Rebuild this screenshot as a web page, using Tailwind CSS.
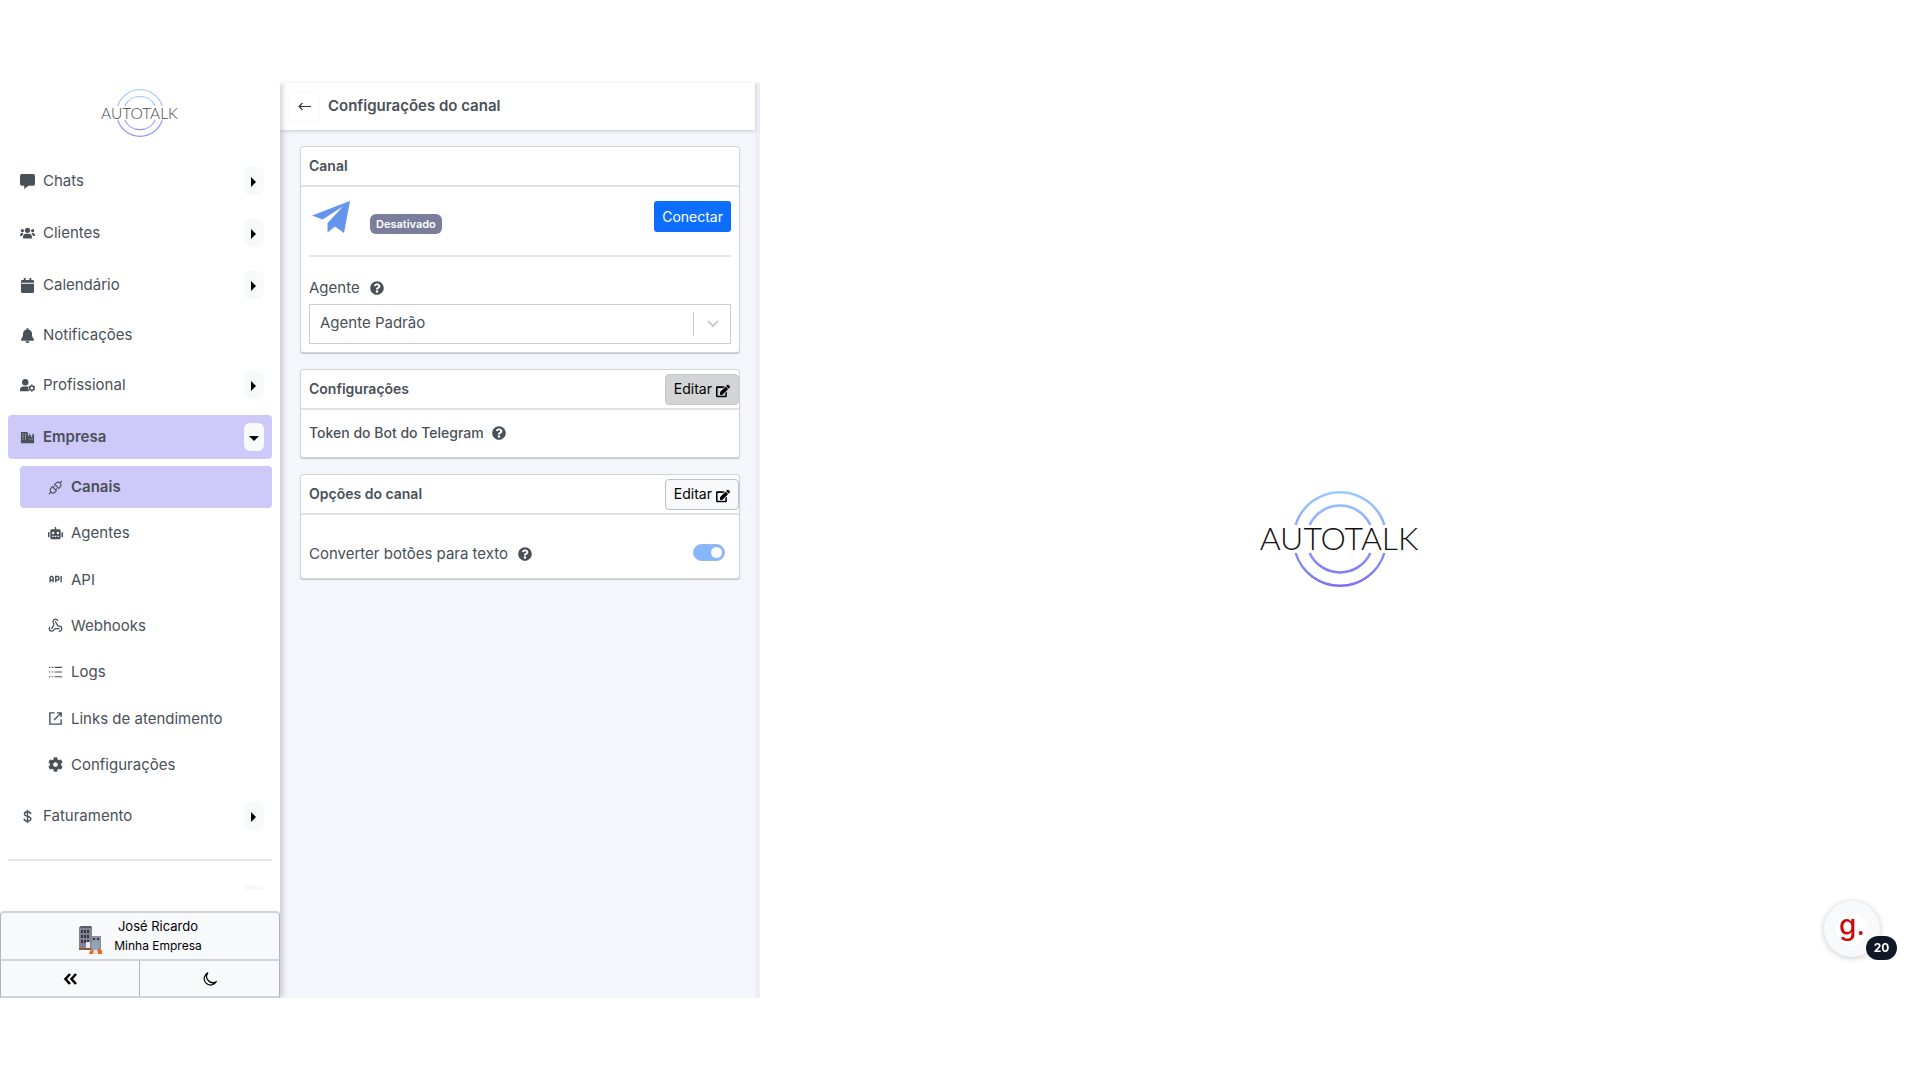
<!DOCTYPE html>
<html lang="pt-BR">
<head>
  <meta charset="utf-8">
  <title>Configurações do canal - Autotalk</title>
  <meta name="viewport" content="width=device-width, initial-scale=1.0" />
  <script src="https://cdn.jsdelivr.net/npm/@tailwindcss/browser@4"></script>
</head>
<body class="bg-white font-['Inter','Liberation_Sans',sans-serif] text-[15px] leading-6 text-[#495057]">

<!-- Símbolos reutilizados -->
<svg class="absolute size-0" aria-hidden="true">
  <defs>
    <linearGradient id="grad" gradientUnits="userSpaceOnUse" x1="0" y1="0" x2="0" y2="96">
      <stop offset="0" stop-color="#9accff" />
      <stop offset="1" stop-color="#7a70f5" />
    </linearGradient>
  </defs>
  <symbol id="help" viewBox="0 0 512 512">
    <path fill="currentColor" d="M504 256c0 137-111 248-248 248S8 393 8 256 119 8 256 8s248 111 248 248zM262.700 90c-54.500 0-89.300 23-116.500 63.800-3.500 5.300-2.400 12.400 2.700 16.300l34.700 26.300c5.200 3.900 12.600 3 16.700-2.100 17.900-22.700 30.100-35.800 57.300-35.800 20.400 0 45.700 13.100 45.700 33 0 15-12.400 22.700-32.500 34C247.100 238.500 216 255 216 296v4c0 6.600 5.400 12 12 12h56c6.600 0 12-5.400 12-12v-1.300c0-28.800 84.200-30 84.200-107.900C380.200 132.200 319.300 90 262.700 90zM256 338c-25.400 0-46 20.600-46 46s20.600 46 46 46 46-20.600 46-46-20.600-46-46-46z" />
  </symbol>
  <symbol id="edit" viewBox="0 0 576 512">
    <path fill="currentColor" d="M402.600 83.200l90.200 90.200c3.800 3.800 3.800 10 0 13.800L274.400 405.600l-92.800 10.300c-12.400 1.400-22.900-9.100-21.500-21.500l10.300-92.800L388.800 83.200c3.800-3.800 10-3.800 13.800 0zm162-22.900l-48.800-48.800c-15.200-15.200-39.900-15.200-55.200 0l-35.400 35.400c-3.800 3.800-3.800 10 0 13.800l90.200 90.200c3.800 3.800 10 3.800 13.800 0l35.400-35.400c15.200-15.300 15.200-40 0-55.200zM384 346.200V448H64V128h229.800c3.200 0 6.200-1.300 8.500-3.500l40-40c7.600-7.600 2.200-20.500-8.500-20.500H48C21.500 64 0 85.500 0 112v352c0 26.500 21.500 48 48 48h352c26.500 0 48-21.500 48-48V306.200c0-10.700-12.900-16-20.500-8.500l-40 40c-2.200 2.300-3.500 5.300-3.500 8.500z" />
  </symbol>
  <symbol id="rings" viewBox="0 0 160 96">
    <g fill="none" stroke="url(#grad)" stroke-width="2.500">
      <path d="M35.600 34A46.500 46.500 0 0 1 124.400 34M35.600 62A46.500 46.500 0 0 0 124.400 62" />
      <path d="M49.600 34A33.500 33.500 0 0 1 110.400 34M49.600 62A33.500 33.500 0 0 0 110.400 62" />
    </g>
  </symbol>
</svg>

<div class="flex min-h-screen flex-col pt-[83px] pb-[82px]">
  <div class="flex flex-1">

    <!-- Menu lateral -->
    <aside class="relative z-10 flex w-[280px] shrink-0 flex-col bg-white shadow-[2px_0_6px_rgba(60,70,100,0.28)] [clip-path:inset(0_-10px_0_0)]">
      <div class="flex justify-center pt-1.5">
        <svg class="h-12 w-20 opacity-80" viewBox="0 0 160 96" role="img" aria-label="Autotalk">
          <use href="#rings" width="160" height="96" />
          <text x="79" y="59" text-anchor="middle" fill="#111" font-family="Lato" font-weight="300" font-size="31">AUTOTALK</text>
        </svg>
      </div>

      <nav class="mt-[22px] flex flex-col gap-2 px-2">
        <div class="flex h-11 items-center justify-between pr-2 pl-3">
          <a href="#" class="flex items-center gap-2">
            <svg class="size-[15px]" viewBox="0 0 16 16" fill="currentColor"><path d="M2 0a2 2 0 0 0-2 2v8.500a2 2 0 0 0 2 2h2.500V16L9 12.500h5a2 2 0 0 0 2-2V2a2 2 0 0 0-2-2z" /></svg>
            Chats
          </a>
          <button aria-label="Abrir Chats" class="flex h-7 w-5 items-center justify-center rounded-md bg-[#f8f9fa]"><svg class="mt-0.5 mr-px h-2.5 w-[5px]" viewBox="0 0 5 10"><path d="M0 0l5 5-5 5z" /></svg></button>
        </div>
        <div class="flex h-11 items-center justify-between pr-2 pl-3">
          <a href="#" class="flex items-center gap-2">
            <svg class="size-[15px]" viewBox="0 0 16 16" fill="currentColor"><circle cx="8" cy="4.600" r="2.800" /><circle cx="2.500" cy="5" r="1.700" /><circle cx="13.500" cy="5" r="1.700" /><path d="M3.300 13.200v-1.700c0-2 1.400-3.200 3-3.200h3.400c1.600 0 3 1.200 3 3.200v1.700zM0 10.700c0-2.200.8-3.200 2-3.200h1.900C2.900 8.500 2.400 9.500 2.300 10.700zM16 10.700c0-2.200-.8-3.200-2-3.200h-1.900c1 1 1.500 2 1.600 3.200z" /></svg>
            Clientes
          </a>
          <button aria-label="Abrir Clientes" class="flex h-7 w-5 items-center justify-center rounded-md bg-[#f8f9fa]"><svg class="mt-0.5 mr-px h-2.5 w-[5px]" viewBox="0 0 5 10"><path d="M0 0l5 5-5 5z" /></svg></button>
        </div>
        <div class="flex h-11 items-center justify-between pr-2 pl-3">
          <a href="#" class="flex items-center gap-2">
            <svg class="size-[15px]" viewBox="0 0 16 16" fill="currentColor"><path d="M4 0h2v2h4V0h2v2h1.500A1.500 1.500 0 0 1 15 3.500V5H1V3.500A1.500 1.500 0 0 1 2.500 2H4zM1 6h14v8.500a1.500 1.500 0 0 1-1.500 1.500h-11A1.500 1.500 0 0 1 1 14.500z" /></svg>
            Calendário
          </a>
          <button aria-label="Abrir Calendário" class="flex h-7 w-5 items-center justify-center rounded-md bg-[#f8f9fa]"><svg class="mt-0.5 mr-px h-2.5 w-[5px]" viewBox="0 0 5 10"><path d="M0 0l5 5-5 5z" /></svg></button>
        </div>
        <div class="flex h-10 items-center pl-3">
          <a href="#" class="flex items-center gap-2">
            <svg class="size-[15px]" viewBox="0 0 16 16" fill="currentColor"><path d="M8 0a1 1 0 0 0-1 1v.7C4.600 2.100 3.200 4 3.200 6.500c0 3-.8 4.100-1.800 5.200-.8.900-.3 1.900.6 1.900h12c.9 0 1.400-1 .6-1.900-1-1.100-1.800-2.200-1.800-5.200C12.800 4 11.400 2.100 9 1.700V1a1 1 0 0 0-1-1zM6 14.200h4a2 2 0 0 1-4 0z" /></svg>
            Notificações
          </a>
        </div>
        <div class="flex h-11 items-center justify-between pr-2 pl-3">
          <a href="#" class="flex items-center gap-2">
            <svg class="size-[15px]" viewBox="0 0 16 16" fill="currentColor"><circle cx="5.600" cy="4.500" r="3.400" /><path d="M0 14v-1.500C0 10 1.800 9 3.500 9h4.300c.8 0 1 .2 1.400.5-.7 1.500-.4 3.300.9 4.500z" /><circle cx="12.600" cy="10.800" r="2.200" fill="none" stroke="currentColor" stroke-width="1.500" /><path d="M11.900 7h1.400v1.400h-1.400zM11.900 13.200h1.400v1.400h-1.400zM8.900 9.400l.7-1.200 1.300.8-.7 1.200zM14.300 12.600l.7-1.200 1.300.8-.7 1.200zM8.900 12.200l1.300-.8.7 1.200-1.300.8zM14.300 9l1.300-.8.7 1.200-1.300.8z" /></svg>
            Profissional
          </a>
          <button aria-label="Abrir Profissional" class="flex h-7 w-5 items-center justify-center rounded-md bg-[#f8f9fa]"><svg class="mt-0.5 mr-px h-2.5 w-[5px]" viewBox="0 0 5 10"><path d="M0 0l5 5-5 5z" /></svg></button>
        </div>

        <div>
          <div class="flex h-11 items-center justify-between rounded-sm bg-[#cdc9f8] pr-2 pl-3">
            <a href="#" class="flex items-center gap-2 font-semibold">
              <svg class="size-[15px]" viewBox="0 0 16 16" fill="currentColor"><path fill-rule="evenodd" d="M1 2h6l1.500 1v3.500H9.500v-3l2 2V7l1.500.5V5l1-1 1 1v9H1zM2.600 4v1.200h1.100V4zm2.700 0v1.200h1.100V4zM2.600 6.500v1.200h1.100V6.500zm2.700 0v1.200h1.100V6.500zM2.600 9v1.200h1.100V9zm2.700 0v1.200h1.100V9zM10 9v1.200h1V9zm2.500 0v1.200h1V9z" /></svg>
              Empresa
            </a>
            <button aria-label="Fechar Empresa" class="flex h-7 w-5 items-center justify-center rounded-md bg-[#f8f9fa]"><svg class="mt-0.5 h-[5px] w-2.5" viewBox="0 0 10 5"><path d="M0 0h10L5 5z" /></svg></button>
          </div>

          <!-- Submenu de Empresa -->
          <div class="mt-[7px] flex h-80 flex-col justify-between pl-3">
            <a href="#" class="flex h-[42px] items-center gap-2 rounded-sm bg-[#cdc9f8] pl-7 font-semibold">
              <svg class="size-[15px]" viewBox="0 0 16 16" fill="none" stroke="currentColor" stroke-width="1.100"><path d="M1 15l2.300-2.300M15 1l-2.300 2.300M4.500 7l4.500 4.500-1.500 1.400c-1.200 1.200-3 1.200-4.200 0s-1.200-3 0-4.300zM7 4.500L11.500 9l1.400-1.500c1.200-1.200 1.200-3 0-4.200s-3-1.200-4.300 0zM5.500 8l1.700-1.700M8 10.500l1.700-1.700" /></svg>
              Canais
            </a>
            <a href="#" class="flex h-[42px] items-center gap-2 pl-7">
              <svg class="size-[15px]" viewBox="0 0 16 16" fill="currentColor"><path fill-rule="evenodd" d="M7.300 1h1.400v2.500H12a1.500 1.500 0 0 1 1.500 1.500v7.500A1.500 1.500 0 0 1 12 14H4a1.500 1.500 0 0 1-1.500-1.500V5A1.500 1.500 0 0 1 4 3.500h3.300zM5.500 6.200a1.200 1.200 0 1 0 0 2.500 1.200 1.200 0 0 0 0-2.500zm5 0a1.200 1.200 0 1 0 0 2.500 1.200 1.200 0 0 0 0-2.500zM4.500 10.500v1.200H6v-1.200zm2.700 0v1.200h1.600v-1.200zm2.800 0v1.200h1.500v-1.200z" /><rect y="6.500" width="1.600" height="5.500" rx=".8" /><rect x="14.400" y="6.500" width="1.600" height="5.500" rx=".8" /></svg>
              Agentes
            </a>
            <a href="#" class="flex h-[42px] items-center gap-2 pl-7">
              <svg class="size-[15px]" viewBox="0 0 16 16" fill="none" stroke="currentColor" stroke-width="1.500"><path d="M2.200 11V6L3.200 4.800h1.300l1 1.200V11M2.200 8.500h3.300M8.200 11V4.800h2.500l.8.800v2l-.8.900H8.200M14 4.200V11" /></svg>
              API
            </a>
            <a href="#" class="flex h-[42px] items-center gap-2 pl-7">
              <svg class="size-[15px]" viewBox="0 0 24 24" fill="none" stroke="currentColor" stroke-width="2" stroke-linecap="round" stroke-linejoin="round"><path d="M18 16.980h-5.990c-1.100 0-1.950.940-2.480 1.900A4 4 0 0 1 2 17c.010-.700.200-1.400.570-2" /><path d="m6 17 3.130-5.780c.530-.970.100-2.180-.500-3.100a4 4 0 1 1 6.890-4.060" /><path d="m12 6 3.130 5.730C15.660 12.700 16.900 13 18 13a4 4 0 0 1 0 8" /></svg>
              Webhooks
            </a>
            <a href="#" class="flex h-[42px] items-center gap-2 pl-7">
              <svg class="size-[15px]" viewBox="0 0 16 16" fill="none" stroke="currentColor" stroke-width="1.200"><path d="M1 2.500h1.500M1 7.500h1.500M1 12.500h1.500M4 2.500h1.500M4 7.500h1.500M4 12.500h1.500M7 2.500h8M7 7.500h8M7 12.500h8" /></svg>
              Logs
            </a>
            <a href="#" class="flex h-[42px] items-center gap-2 pl-7">
              <svg class="size-[15px]" viewBox="0 0 16 16" fill="none" stroke="currentColor" stroke-width="1.500"><path d="M7 2H2v12h12V9M9.500 2H14v4.500M14 2L6.500 9.500" /></svg>
              Links de atendimento
            </a>
            <a href="#" class="flex h-[42px] items-center gap-2 pl-7">
              <svg class="size-[15px]" viewBox="0 0 512 512" fill="currentColor"><path d="M487.400 315.700l-42.600-24.600c4.300-23.200 4.300-47 0-70.200l42.600-24.600c4.900-2.800 7.100-8.600 5.500-14-11.100-35.600-30-67.800-54.700-94.600-3.800-4.100-10-5.100-14.800-2.300L380.800 110c-17.900-15.400-38.500-27.300-60.800-35.100V25.800c0-5.600-3.900-10.500-9.400-11.700-36.700-8.200-74.300-7.800-109.200 0-5.500 1.200-9.400 6.100-9.400 11.700V75c-22.200 7.900-42.800 19.800-60.800 35.100L88.700 85.500c-4.900-2.800-11-1.900-14.800 2.300-24.700 26.700-43.600 58.900-54.700 94.600-1.700 5.400.6 11.200 5.500 14L67.300 221c-4.300 23.200-4.300 47 0 70.200l-42.600 24.600c-4.900 2.800-7.100 8.600-5.500 14 11.100 35.600 30 67.800 54.700 94.600 3.800 4.100 10 5.100 14.800 2.300l42.600-24.600c17.900 15.400 38.500 27.300 60.800 35.100v49.200c0 5.600 3.900 10.500 9.400 11.700 36.700 8.200 74.300 7.800 109.200 0 5.500-1.200 9.400-6.100 9.400-11.700v-49.200c22.200-7.900 42.800-19.800 60.800-35.100l42.600 24.600c4.900 2.800 11 1.900 14.800-2.300 24.700-26.700 43.600-58.900 54.700-94.600 1.500-5.500-.7-11.300-5.600-14.100zM256 336c-44.100 0-80-35.900-80-80s35.900-80 80-80 80 35.900 80 80-35.900 80-80 80z" /></svg>
              Configurações
            </a>
          </div>
        </div>

        <div class="flex h-11 items-center justify-between pr-2 pl-3">
          <a href="#" class="flex items-center gap-2">
            <svg class="size-[15px]" viewBox="0 0 16 16" fill="none" stroke="currentColor" stroke-width="1.500"><path d="M8 1v14M11.500 5.500C11.300 3.700 10 3 8 3 6 3 4.700 4 4.700 5.400c0 3.300 6.900 1.700 6.900 5.100C11.600 12 10.200 13 8 13s-3.500-.9-3.700-2.700" /></svg>
            Faturamento
          </a>
          <button aria-label="Abrir Faturamento" class="flex h-7 w-5 items-center justify-center rounded-md bg-[#f8f9fa]"><svg class="mt-0.5 mr-px h-2.5 w-[5px]" viewBox="0 0 5 10"><path d="M0 0l5 5-5 5z" /></svg></button>
        </div>
      </nav>

      <hr class="mx-2 mt-[21px] border-t-2 border-[#e6e6e6]">
      <div class="mt-6 flex justify-end pr-4">
        <div class="h-[5px] w-5 rounded-t-md bg-[#f8f9fa]"></div>
      </div>

      <!-- Conta e ações -->
      <div class="mt-auto text-black">
        <button class="flex h-12 w-full items-center justify-center gap-3 rounded-t border border-t-2 border-b-0 border-[#adb5bd] border-t-[#ced4da] bg-[#f8f9fa]">
          <svg class="mt-1.5 h-[29px] w-6" viewBox="0 0 24 29">
            <path d="M13 11h10v14H12z" fill="#8e8f9b" />
            <path d="M1 3l2-2h10l1 2v22H1z" fill="#84848f" />
            <path d="M1 3l2-2h10l1 2z" fill="#5a5a64" />
            <path d="M3 5h2v3H3zM6 5h2v3H6zM9 5h2v3H9zM3 10h2v3H3zM6 10h2v3H6zM9 10h2v3H9zM3 15h2v3H3zM6 15h2v3H6zM9 15h2v3H9zM15 13h2v2h-2zM19 13h2v2h-2z" fill="#34364a" />
            <path d="M1 23h12v2H1z" fill="#8a5a3c" />
            <path d="M8 17h4v6H8z" fill="#e8e8ec" />
            <path d="M11 29l1-3 4-2 3-1 3 1 2 2v3z" fill="#f0641e" />
            <path d="M15 29l1-6h3l1 6z" fill="#dce8f0" />
            <ellipse cx="17.500" cy="20" rx="4.500" ry="5" fill="#8ea3b5" />
          </svg>
          <span class="flex flex-col items-center text-xs leading-5">
            <span class="text-[13px] leading-5">José Ricardo</span>
            Minha Empresa
          </span>
        </button>
        <div class="grid h-[39px] grid-cols-2 border border-y-2 border-[#adb5bd] border-y-[#ced4da] bg-[#f8f9fa]">
          <button aria-label="Recolher menu" class="flex items-center justify-center border-r border-[#adb5bd]">
            <svg class="size-3.5" viewBox="0 0 14 14" fill="none" stroke="black" stroke-width="2.600"><path d="M7 2L2.500 7 7 12M13 2L8.500 7l4.500 5" /></svg>
          </button>
          <button aria-label="Modo escuro" class="flex items-center justify-center">
            <svg class="size-3.5" viewBox="0 0 16 16" fill="none" stroke="black" stroke-width="1.400" stroke-linejoin="round"><path d="M5.500 1A7.300 7.300 0 1 0 15.200 10.800 7 7 0 0 1 5.500 1z" /></svg>
          </button>
        </div>
      </div>
    </aside>

    <!-- Painel de configurações -->
    <main class="flex w-[480px] shrink-0 flex-col border-r-[5px] border-[#eeeef6] bg-[#f5f6fb]">
      <header class="flex h-[47px] items-center gap-2 bg-white pb-px pl-2 shadow-[0_1px_4px_rgba(60,70,100,0.25)]">
        <button aria-label="Voltar" class="flex h-[31px] w-8 items-center justify-center rounded border border-[#f8f9fa]">
          <svg class="size-[13px]" viewBox="0 0 13 13" fill="none" stroke="#333" stroke-width="1.100"><path d="M13 6.500H1M4.500 3L1 6.500 4.500 10" /></svg>
        </button>
        <h1 class="font-semibold">Configurações do canal</h1>
      </header>

      <div class="flex flex-col gap-4 pt-4 pr-[15px] pl-5">
        <!-- Canal -->
        <section class="rounded-[3px] border border-[#d4d4d4] bg-white shadow-[0_1px_1px_rgba(0,0,0,0.2)]">
          <h2 class="flex h-10 items-center border-b-2 border-[#e2e2e2] px-2 text-sm font-semibold">Canal</h2>
          <div class="px-2 pb-2">
            <div class="flex h-[70px] justify-between border-b-2 border-[#e6e6e6] pt-3.5">
              <div class="flex gap-5">
                <svg class="ml-[3px] h-8 w-[38px]" viewBox="0 0 38 32" fill="#6495ed"><path d="M0 14.500L38 0 32 32l-9-6.500-7.500 6v-9.500L31 5.500 10.500 18.500z" /></svg>
                <span class="mt-[13px] h-5 self-start rounded-md bg-[#7a7e9a] px-1.5 text-[11px] leading-5 font-semibold text-white">Desativado</span>
              </div>
              <button class="h-[31px] rounded-[3px] bg-[#0d6efd] px-2 text-sm text-white">Conectar</button>
            </div>
            <label for="agente" class="mt-[19px] flex items-center gap-2.5">Agente <svg class="size-3.5"><use href="#help" /></svg></label>
            <div class="relative mt-1">
              <select id="agente" class="h-10 w-full appearance-none border border-[#cccccc] bg-white px-2.5 pb-0.5">
                <option>Agente Padrão</option>
              </select>
              <div class="pointer-events-none absolute inset-y-0 right-0 my-2 flex w-[38px] items-center justify-center border-l border-[#cccccc]">
                <svg class="size-3" viewBox="0 0 12 12" fill="none" stroke="#cccccc" stroke-width="2"><path d="M1 3l5 5 5-5" /></svg>
              </div>
            </div>
          </div>
        </section>

        <!-- Configurações -->
        <section class="rounded-[3px] border border-[#d4d4d4] bg-white shadow-[0_1px_1px_rgba(0,0,0,0.2)]">
          <div class="flex h-10 items-center justify-between border-b-2 border-[#e2e2e2] pl-2">
            <h2 class="text-sm font-semibold">Configurações</h2>
            <button class="flex h-[31px] items-center gap-1 rounded border border-[#c6c7c8] bg-[#d3d4d5] px-2 text-sm text-black">Editar <svg class="mt-1 size-3.5"><use href="#edit" /></svg></button>
          </div>
          <p class="flex h-[47px] items-center gap-2 px-2 pb-0.5 text-sm font-medium">Token do Bot do Telegram <svg class="size-3.5"><use href="#help" /></svg></p>
        </section>

        <!-- Opções do canal -->
        <section class="rounded-[3px] border border-[#d4d4d4] bg-white shadow-[0_1px_1px_rgba(0,0,0,0.2)]">
          <div class="flex h-10 items-center justify-between border-b-2 border-[#e2e2e2] pl-2">
            <h2 class="text-sm font-semibold">Opções do canal</h2>
            <button class="flex h-[31px] items-center gap-1 rounded border border-[#b9c0c8] bg-[#f8f9fa] px-2 text-sm text-black">Editar <svg class="mt-1 size-3.5"><use href="#edit" /></svg></button>
          </div>
          <div class="flex h-[63px] items-center justify-between pt-3.5 pr-3.5 pl-2">
            <label for="converter" class="flex items-center gap-2.5">Converter botões para texto <svg class="size-3.5"><use href="#help" /></svg></label>
            <div class="relative mb-0.5 h-[17px] w-8">
              <input id="converter" type="checkbox" role="switch" checked class="block h-[17px] w-8 appearance-none rounded-full border border-[#9cb8e2] bg-[#86b7fe]">
              <span class="pointer-events-none absolute top-[3px] right-[3px] size-[11px] rounded-full bg-white"></span>
            </div>
          </div>
        </section>
      </div>
    </main>

    <!-- Área vazia com o logotipo -->
    <div class="flex flex-1 items-center justify-center pb-1">
      <svg class="h-24 w-40" viewBox="0 0 160 96" role="img" aria-label="Autotalk">
        <use href="#rings" width="160" height="96" />
        <text x="79" y="59" text-anchor="middle" fill="#111" font-family="Lato" font-weight="300" font-size="32">AUTOTALK</text>
      </svg>
    </div>
  </div>
</div>

<!-- Widget flutuante -->
<div class="fixed right-10 bottom-[123px]">
  <button aria-label="Abrir widget" class="flex size-14 items-center justify-center rounded-full bg-[#f8f9fb] shadow-[0_1px_6px_rgba(0,0,0,0.22)]">
    <span class="flex size-8 items-center justify-center rounded-full bg-white pb-2 text-[28px] font-medium text-[#cc0a0a]">g.</span>
  </button>
  <span class="absolute -right-[17px] -bottom-[3px] flex h-6 w-[31px] items-center justify-center rounded-full bg-[#101828] text-xs font-bold text-white">20</span>
</div>

</body>
</html>
